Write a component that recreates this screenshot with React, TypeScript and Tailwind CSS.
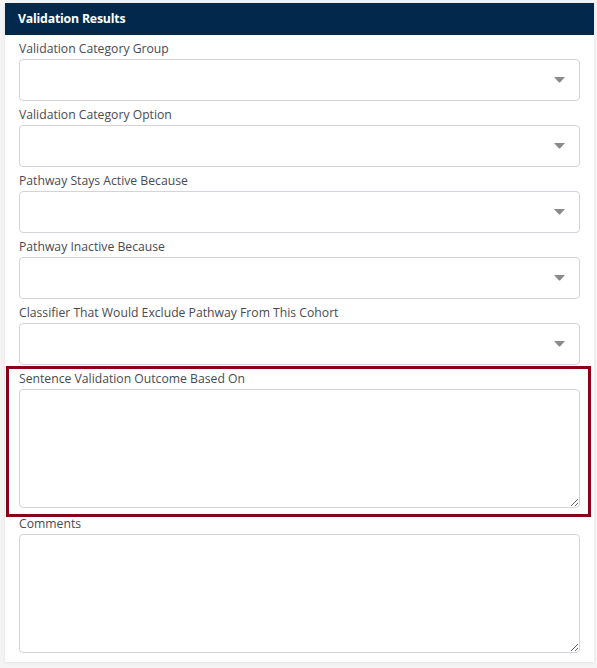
import React from 'react';

const selects = [
    'Validation Category Group',
    'Validation Category Option',
    'Pathway Stays Active Because',
    'Pathway Inactive Because',
    'Classifier That Would Exclude Pathway From This Cohort',
];

function Caret() {
    return (
        <svg width="11" height="6" viewBox="0 0 11 6" className="absolute right-[14px] top-1/2 -translate-y-1/2 pointer-events-none">
            <path d="M0 0 L11 0 L6 5.5 L5 5.5 Z" fill="#8a8a8a" />
        </svg>
    );
}

function Label({ children }: { children: React.ReactNode }) {
    return <label className="block text-[12.2px] leading-[18px] mb-px text-[#4a4a52]">{children}</label>;
}

export default function App() {
    return (
        <div className="min-h-screen bg-[#f4f4f5] pl-[5px] pr-[3px] pt-[3px] pb-[6px]" style={{ fontFamily: '"Open Sans", "Noto Sans", Arial, sans-serif' }}>
            <div className="bg-white shadow-[0_1px_3px_rgba(0,0,0,0.08)]">
                <div className="h-[32px] bg-[#02284b] px-[13px] flex items-center">
                    <h2 className="text-white font-bold text-[12.3px] tracking-[-0.2px]">Validation Results</h2>
                </div>
                <div className="px-[14px] pb-[9px]">
                    {selects.map((s) => (
                        <div key={s} className="pt-[5px]">
                            <Label>{s}</Label>
                            <div className="relative h-[42px] border border-[#d4d3da] rounded-[4px] bg-white">
                                <Caret />
                            </div>
                        </div>
                    ))}
                    <div className="pt-[5px] relative">
                        <Label>Sentence Validation Outcome Based On</Label>
                        <textarea className="block w-full h-[119px] border border-[#d4d3da] rounded-[4px] bg-white outline-none" />
                        {/* highlighted group */}
                        <div className="absolute top-[1px] -bottom-[9px] -left-[13px] -right-[11px] border-[3px] border-[#8a0016] pointer-events-none" />
                    </div>
                    <div className="pt-[7px]">
                        <Label>Comments</Label>
                        <textarea className="block w-full h-[119px] border border-[#d4d3da] rounded-[4px] bg-white outline-none" />
                    </div>
                </div>
            </div>
        </div>
    );
}
